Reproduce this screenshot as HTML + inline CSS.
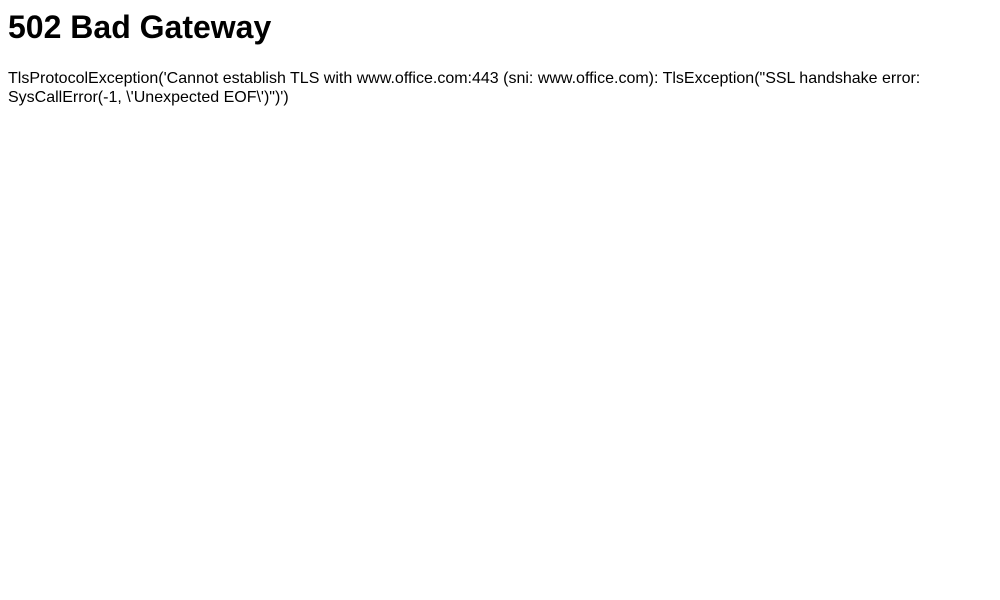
<!DOCTYPE html>
<html><head><style>
body{margin:8px;font-family:"Liberation Sans",Arial,sans-serif;background:#fff;color:#000}
h1{font-size:32px;margin:0 0 23px 0;padding-top:1px}
p{font-size:16px;line-height:19px;margin:16px 0}
</style></head><body>
<h1>502 Bad Gateway</h1>
<p>TlsProtocolException('Cannot establish TLS with www.office.com:443 (sni: www.office.com): TlsException("SSL handshake error: SysCallError(-1, \'Unexpected EOF\')")')</p>
</body></html>
